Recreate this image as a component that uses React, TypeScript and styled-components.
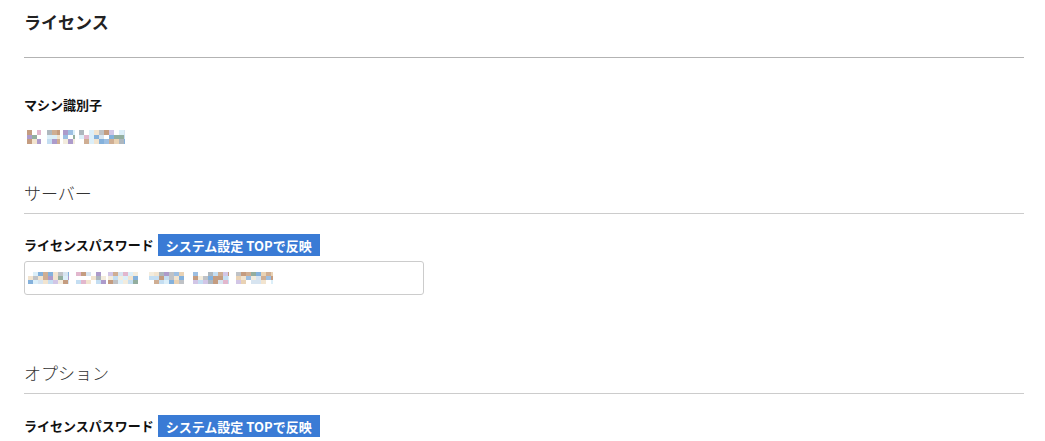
import React from "react";
import styled, { createGlobalStyle } from "styled-components";

const Global = createGlobalStyle`
  html, body { margin: 0; padding: 0; background: #fff; }
  body { font-family: "Noto Sans CJK JP", "Noto Sans", sans-serif; color: #222; }
`;

const Page = styled.div`
  width: 1000px;
  margin-left: 24px;
  overflow: hidden;
  height: 441px;
`;

const Header = styled.div`
  padding-top: 10px;
  padding-bottom: 23px;
  border-bottom: 1px solid #b3b3b3;
`;

const Title = styled.h1`
  margin: 0;
  font-size: 17px;
  line-height: 24px;
  font-weight: 700;
  color: #222;
`;

const Field = styled.div<{ $top: number }>`
  margin-top: ${(p) => p.$top}px;
  display: flex;
  flex-direction: column;
  align-items: flex-start;
`;

const Label = styled.div`
  font-size: 13px;
  line-height: 18px;
  font-weight: 700;
  color: #111;
`;

const LabelRow = styled.div`
  display: flex;
  align-items: center;
  gap: 4px;
  height: 22px;
`;

const Badge = styled.span`
  display: inline-flex;
  align-items: center;
  height: 22px;
  padding: 0 8px;
  background: #3a7bd5;
  color: #fff;
  font-size: 13px;
  font-weight: 700;
  white-space: nowrap;
`;

const ValueWrap = styled.div`
  margin-top: 16px;
  padding-left: 3px;
  height: 14px;
`;

const SectionHead = styled.h2<{ $top: number }>`
  margin: ${(p) => p.$top}px 0 0;
  font-size: 17px;
  line-height: 24px;
  font-weight: 300;
  color: #333;
  padding-bottom: 8px;
  border-bottom: 1px solid #cccccc;
`;

const InputBox = styled.div`
  margin-top: 5px;
  width: 400px;
  height: 34px;
  box-sizing: border-box;
  border: 1px solid #cccccc;
  border-radius: 3px;
  display: flex;
  align-items: center;
  padding-left: 3px;
`;

const palette = [
  "#c4def2", "#e9d2b4", "#aeb7be", "#ad9bcb", "#f2e4cf", "#9dbfe2",
  "#d2c6e6", "#dceff9", "#c49c80", "#93ae9f", "#e2b7cd", "#84b1dc",
  "#f3ecdd", "#bfc2c6", "#d7e4f0", "#cfae93",
];

function rng(seed: number) {
  let s = seed;
  return () => {
    s = (s * 9301 + 49297) % 233280;
    return s / 233280;
  };
}

const Mosaic: React.FC<{ segments: [number, number][]; rows: number; cell: number; height: number; seed: number }> = ({
  segments,
  rows,
  cell,
  height,
  seed,
}) => {
  const r = rng(seed);
  const width = segments[segments.length - 1][1];
  const rh = height / rows;
  const rects: React.ReactNode[] = [];
  segments.forEach(([a, b], si) => {
    for (let x = a; x < b; x += cell) {
      for (let y = 0; y < rows; y++) {
        const v = r();
        if (v < 0.1) continue;
        const c = palette[Math.floor(r() * palette.length)];
        rects.push(
          <rect key={`${si}-${x}-${y}`} x={x} y={y * rh} width={Math.min(cell, b - x)} height={rh} fill={c} />
        );
      }
    }
  });
  return (
    <svg width={width} height={height} viewBox={`0 0 ${width} ${height}`} style={{ display: "block" }} shapeRendering="crispEdges">
      {rects}
    </svg>
  );
};

export default function App() {
  return (
    <>
      <Global />
      <Page>
        <Header>
          <Title>ライセンス</Title>
        </Header>

        <Field $top={38}>
          <Label>マシン識別子</Label>
          <ValueWrap>
            <Mosaic
              seed={7}
              rows={3}
              cell={5}
              height={14}
              segments={[[0, 14], [20, 33], [36, 48], [52, 98]]}
            />
          </ValueWrap>
        </Field>

        <SectionHead $top={37}>サーバー</SectionHead>
        <Field $top={20}>
          <LabelRow>
            <Label>ライセンスパスワード</Label>
            <Badge>システム設定 TOPで反映</Badge>
          </LabelRow>
          <InputBox>
            <Mosaic
              seed={21}
              rows={3}
              cell={5}
              height={12}
              segments={[[0, 41], [48, 78], [80, 110], [121, 156], [165, 201], [208, 245]]}
            />
          </InputBox>
        </Field>

        <SectionHead $top={66}>オプション</SectionHead>
        <Field $top={21}>
          <LabelRow>
            <Label>ライセンスパスワード</Label>
            <Badge>システム設定 TOPで反映</Badge>
          </LabelRow>
          <InputBox />
        </Field>
      </Page>
    </>
  );
}
